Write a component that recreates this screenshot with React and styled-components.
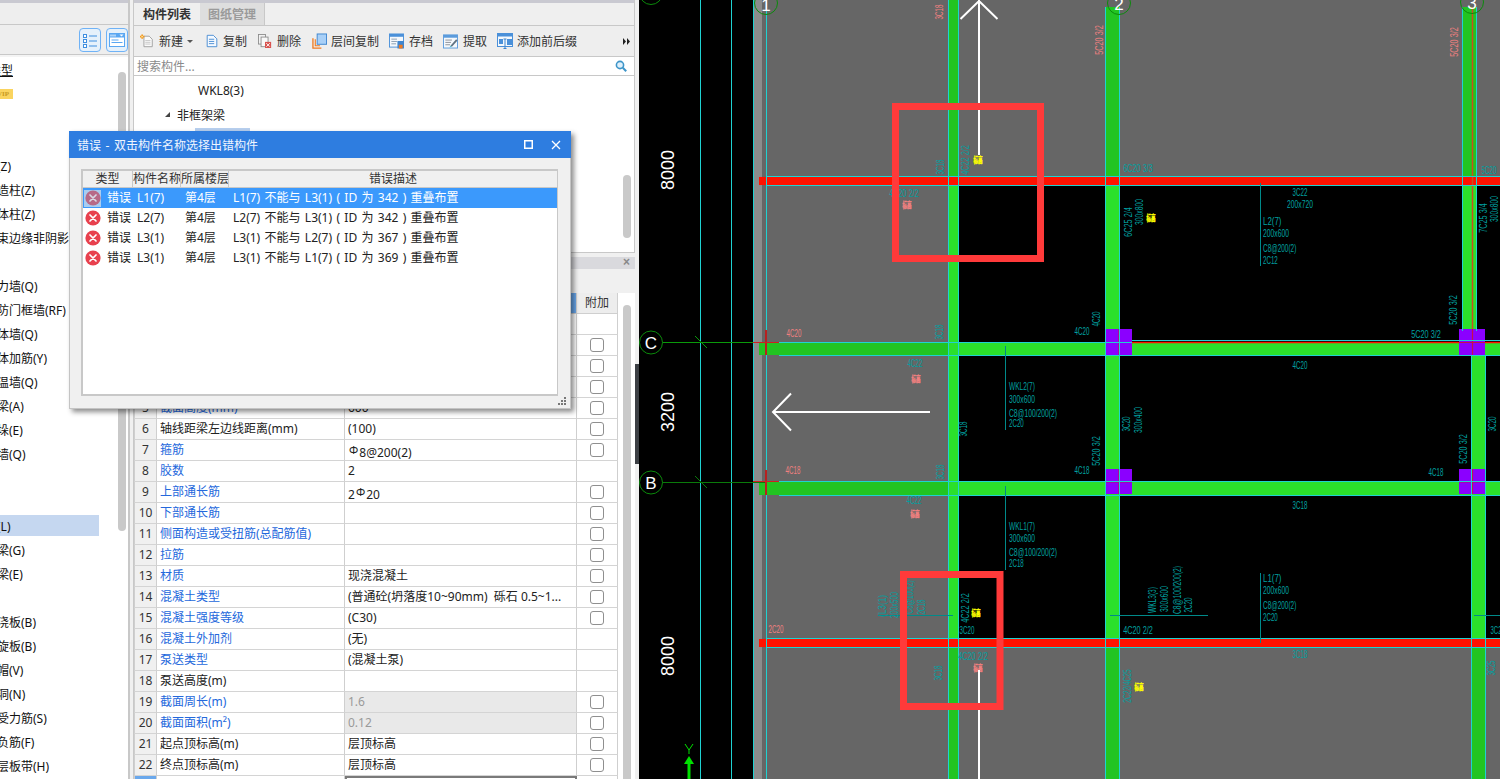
import React from "react";
import styled, { createGlobalStyle } from "styled-components";

const Global = createGlobalStyle`
  html, body { margin: 0; padding: 0; overflow: hidden; background: #f0f0f0; }
  body { font-family: "Noto Sans", "Noto Sans CJK SC", sans-serif; font-size: 12px; color: #222; }
  * { box-sizing: border-box; }
`;

const Page = styled.div`
  position: relative; display: flex; width: 1500px; height: 779px; overflow: hidden; background: #f0f0f0;
`;

/* ---------- left navigation ---------- */
const Nav = styled.aside`
  display: flex; flex-direction: column; width: 134px; height: 779px; flex: none;
  border-right: 1px solid #c8c8c8; 
`;
const NavInner = styled.div`
  display: flex; flex-direction: column; width: 130px; height: 100%; border-right: 2px solid #c8c8c8;
`;
const Strip = styled.div`
  height: 3px; flex: none; background: #c9c9d1;
`;
const NavBlank = styled.div`
  height: 22px; flex: none; background: #eeeeee; border-bottom: 1px solid #c8c8c8;
`;
const NavTools = styled.div`
  height: 30px; flex: none; display: flex; justify-content: flex-end; align-items: center; gap: 5px;
  padding-right: 0; background: #eeeeee; border-bottom: 1px solid #c8c8c8;
`;
const ViewButton = styled.div`
  width: 22px; height: 24px; display: flex; align-items: center; justify-content: center;
  border: 1px solid #6fb2f6; border-radius: 4px; background: #e6f1fb;
`;
const NavGap = styled.div`
  height: 2px; flex: none; background: #f4f4f4;
`;
const NavTree = styled.div`
  position: relative; flex: 1; background: #fff; overflow: hidden; padding-top: 1px;
`;
const NavRow = styled.div`
  width: 99px; height: 24px; padding: 1px 0 2px; line-height: 23px; white-space: nowrap;
  text-indent: ${(p) => p.$indent ?? -15}px;
  background: ${(p) => (p.$selected ? "#c5d7f0" : "transparent")};
  background-clip: content-box;
  text-decoration: ${(p) => (p.$link ? "underline" : "none")};
  color: #111;
`;
const Vip = styled.span`
  display: inline-block; width: 28px; height: 10px; line-height: 10px; text-indent: 0; text-align: right; padding-right: 4px;
  background: #fad45f; color: #c79a22; font: bold 7px/10px "Liberation Serif", serif; vertical-align: 3px;
`;
const NavScroll = styled.div`
  position: absolute; left: 118px; top: 15px; width: 8px; height: 459px; border-radius: 4px; background: #c9c9c9;
`;

/* ---------- middle panels ---------- */
const Main = styled.main`
  display: flex; flex-direction: column; width: 501px; height: 779px; flex: none;
`;
const ListPanel = styled.section`
  display: flex; flex-direction: column; height: 253px; flex: none; background: #fff; border-bottom: 1px solid #c8c8c8;
  border-right: 1px solid #c8c8c8;
`;
const TabBar = styled.div`
  display: flex; height: 23px; flex: none; background: #efefef; border-bottom: 1px solid #c8c8c8;
`;
const Tab = styled.div`
  width: ${(p) => (p.$active ? "66px" : "65px")}; padding-left: ${(p) => (p.$active ? "9px" : "8px")};
  line-height: 24px; font-weight: 700; font-size: 12px;
  background: ${(p) => (p.$active ? "#efefef" : "#dedede")};
  color: ${(p) => (p.$active ? "#333" : "#9a9a9a")};
  border-right: ${(p) => (p.$active ? "none" : "1px solid #c8c8c8")};
`;
const Toolbar = styled.div`
  display: flex; align-items: center; height: 31px; flex: none; padding-left: 6px; background: #eeeeee;
  border-bottom: 1px solid #c8c8c8; position: relative;
`;
const ToolItem = styled.div`
  display: flex; align-items: center; gap: ${(p) => p.$gap ?? 5}px; margin-right: ${(p) => p.$mr ?? 10}px;
  color: #333; white-space: nowrap;
`;
const Caret = styled.span`
  width: 0; height: 0; margin-left: -1px; border-left: 3px solid transparent; border-right: 3px solid transparent; border-top: 3px solid #555;
`;
const More = styled.div`
  position: absolute; right: 4px; top: 12px; display: flex;
`;
const SearchBar = styled.div`
  display: flex; align-items: center; justify-content: space-between; height: 19px; flex: none; padding: 0 7px 0 3px;
  color: #8a8a8a; background: #fff; border-bottom: 1px solid #c8c8c8;
`;
const ListTree = styled.div`
  position: relative; flex: 1; padding-top: 2px; overflow: hidden; background: #fff;
`;
const ListRow = styled.div`
  display: flex; align-items: center; gap: 7px; height: 24.5px; padding-left: ${(p) => p.$indent}px; color: #222;
`;
const TreeArrow = styled.span`
  width: 0; height: 0; border-left: 5px solid transparent; border-bottom: 5px solid #444;
`;
const PickedBar = styled.span`
  display: block; width: 55px; height: 22px; background: #b7cfee;
`;
const ListScroll = styled.div`
  position: absolute; left: 489px; top: 99px; width: 8px; height: 63px; border-radius: 4px; background: #c9c9c9;
`;
const PropPanel = styled.section`
  flex: 1; display: flex; flex-direction: column; min-height: 0; background: #fff; position: relative;
`;
const PropTitle = styled.div`
  height: 16px; flex: none; display: flex; justify-content: flex-end; align-items: flex-end; background: linear-gradient(#f0f0f0 4px, #d9d9dd 4px);
  padding: 0 5px 1px 0; color: #888; font: bold 12px/12px "Liberation Sans", sans-serif;
`;
const PropTools = styled.div`
  height: 24px; flex: none; background: #f0f0f0;
`;
const Table = styled.div`
  display: grid; grid-template-columns: 23px 188px 232px 41px; width: 484px; grid-auto-rows: 21px; align-content: start;
  flex: none;
`;
const Head = styled.div`
  background: ${(p) => (p.$accent ? "#6aa8ec" : "#ededed")};
  border-right: 1px solid #cfcfcf; border-bottom: 1px solid #cfcfcf;
  line-height: 20px; text-align: center; color: #333;
`;
const NumCell = styled.div`
  background: ${(p) => (p.$active ? "#6aa8ec" : "#f0f0f0")}; border-left: 1px solid #cfcfcf; border-right: 1px solid #cfcfcf; border-bottom: 1px solid #d4d4d4;
  line-height: 20px; text-align: center; color: #333; font-size: 12px;
`;
const NameCell = styled.div`
  padding-left: 3px; line-height: 20px; white-space: nowrap; overflow: hidden;
  color: ${(p) => (p.$link ? "#2468dc" : "#222")};
  border-right: 1px solid #cfcfcf; border-bottom: 1px solid #d4d4d4;
`;
const ValueCell = styled.div`
  padding-left: 3px; padding-right: 4px; line-height: 20px; white-space: pre; overflow: hidden;
  color: ${(p) => (p.$muted ? "#9a9a9a" : "#222")};
  background: ${(p) => (p.$muted ? "#e9e9e9" : "#fff")};
  border-right: 1px solid #cfcfcf; border-bottom: 1px solid #d4d4d4;
  ${(p) => p.$editing && "border: 2px solid #7a7a7a; border-bottom: none;"}
`;
const FlagCell = styled.div`
  display: flex; align-items: center; justify-content: center; background: #fff;
  border-right: 1px solid #cfcfcf; border-bottom: 1px solid #d4d4d4;
`;
const Check = styled.span`
  display: block; width: 14px; height: 14px; border: 1px solid #8f8f8f; border-radius: 3px; background: #fff;
`;
const Rebar = styled.span`
  font-size: 11px; vertical-align: 3px; margin: 0 1px;
`;
const PropScroll = styled.div`
  position: absolute; left: 489px; top: 52px; width: 8px; height: 500px; border-radius: 4px; background: #c9c9c9;
`;

/* ---------- splitter ---------- */
const Splitter = styled.div`
  width: 4px; flex: none; padding-top: 364px; background: #f0f0f0;
`;
const SplitHandle = styled.div`
  width: 4px; height: 100px; background: #3c3f44;
`;

/* ---------- CAD canvas ---------- */
const Canvas = styled.div`
  flex: 1; height: 779px; background: #000; overflow: hidden;
`;
const CadSvg = styled.svg`
  display: block; width: 861px; height: 779px;
  text { font-family: "Liberation Sans", sans-serif; }
`;

/* ---------- error dialog ---------- */
const Dialog = styled.div`
  position: absolute; left: 69px; top: 131px; width: 502px; height: 278px; display: flex; flex-direction: column;
  background: #f0f0f0; border: 1px solid #c4c4c4; border-top: none;
  box-shadow: 3px 3px 5px rgba(0, 0, 0, 0.45);
`;
const DialogTitle = styled.div`
  display: flex; align-items: center; height: 27px; flex: none; margin: 0 -1px; padding: 0 10px 0 8px; background: #2e7de0; color: #eef5ff;
`;
const DialogCaption = styled.span`
  flex: 1; word-spacing: 1.5px;
`;
const DialogIcons = styled.div`
  display: flex; align-items: center; gap: 18px;
`;
const DialogBody = styled.div`
  flex: 1; padding: 11px 12px 12px 11px; min-height: 0;
`;
const ErrorList = styled.div`
  height: 100%; background: #fff; border: 2px solid #c8c8c8; border-right-width: 1px; border-bottom-width: 2px; overflow: hidden;
`;
const ErrorHead = styled.div`
  display: grid; grid-template-columns: 50px 48px 48px 1fr; height: 17px; background: #f0f0f0; border-bottom: 1px solid #c8c8c8; line-height: 16px; color: #333;
`;
const HeadCell = styled.div`
  text-align: center; white-space: nowrap; overflow: hidden; border-right: 1px solid #c8c8c8;
  &:last-child { border-right: none; }
`;
const ErrorRow = styled.div`
  display: grid; grid-template-columns: 50px 48px 48px 1fr; height: 20px; line-height: 20px;
  background: ${(p) => (p.$selected ? "#3b99fc" : "#fff")};
  color: ${(p) => (p.$selected ? "#fff" : "#222")};
`;
const TypeCell = styled.div`
  display: flex; align-items: center; gap: 6px; padding-left: 1px; 
`;
const ErrorCell = styled.div`
  padding-left: 4px; white-space: pre; word-spacing: 1.2px;
`;
const IconFrame = styled.span`
  display: flex; width: 17px; height: 17px; align-items: center; justify-content: center;
  background: ${(p) => (p.$selected ? "#a9cdf0" : "transparent")};
`;
const Grip = styled.svg`
  position: absolute; right: 3px; bottom: 2px; width: 9px; height: 9px;
`;

/* ---------- icons ---------- */
const Ic = ({ w = 15, children }) => (
  <svg width={w} height="16" viewBox="0 0 16 16" style={{ flex: "none" }}>{children}</svg>
);
const IconNew = () => (
  <Ic w={14}>
    <path d="M4.5 2.5h6l3.5 3.5v8.5h-9.5z" fill="#fafafa" stroke="#9a9a9a" />
    <path d="M6 7.5h6M6 9.5h6M6 11.5h6" stroke="#c4c4c4" />
    <path d="M0 2h1.5V0.5h2V2H5v2H3.5v1.5h-2V4H0z" fill="#f39a1f" />
    <rect x="1.6" y="2.2" width="1.6" height="1.6" fill="#ffe9a8" />
  </Ic>
);
const IconCopy = () => (
  <Ic w={14}>
    <path d="M2.5 1.5h7l4 4v9h-11z" fill="#f4f9ff" stroke="#3f86d0" />
    <path d="M4.5 6h6M4.5 8.5h6M4.5 11h6" stroke="#3f86d0" />
  </Ic>
);
const IconDelete = () => (
  <Ic w={14}>
    <rect x="0.5" y="0.5" width="8" height="11" fill="#f2f2f2" stroke="#8a8a8a" />
    <rect x="3.5" y="3.5" width="8" height="11" fill="#f8f8f8" stroke="#8a8a8a" />
    <rect x="8" y="9" width="7" height="7" fill="#d9534f" />
    <path d="M9.5 10.5l4 4M13.5 10.5l-4 4" stroke="#fff" />
  </Ic>
);
const IconFloorCopy = () => (
  <Ic>
    <path d="M1 5v10.5h9" fill="none" stroke="#ee7b22" strokeWidth="1.4" />
    <path d="M3.5 6v7h5" fill="none" stroke="#ee7b22" strokeWidth="1.2" />
    <rect x="5.5" y="0.5" width="10" height="11" fill="#a9d0f7" stroke="#3f86d0" />
  </Ic>
);
const IconArchive = () => (
  <Ic>
    <rect x="0.5" y="0.5" width="15" height="14" fill="#f4f8fc" stroke="#4a90d9" />
    <rect x="0.5" y="0.5" width="15" height="3" fill="#4a90d9" />
    <path d="M2.5 6h6M2.5 8.5h6M2.5 11h5" stroke="#8a9db0" />
    <rect x="9" y="8" width="7" height="8" fill="#3f86d0" />
    <rect x="10.5" y="12" width="4" height="4" fill="#ee7b22" />
  </Ic>
);
const IconExtract = () => (
  <Ic>
    <rect x="0.5" y="1.5" width="15" height="14" fill="#f4f8fc" stroke="#5b9bdc" />
    <rect x="0.5" y="1.5" width="15" height="3" fill="#5b9bdc" />
    <path d="M2.5 7h7M2.5 9.5h6M2.5 12h5" stroke="#8a8f96" />
    <path d="M8 13l6-7 1.5 1.5-6 6.5z" fill="#5e7180" />
    <path d="M7 15l1-2 1.5 0.6z" fill="#2fb4c4" />
  </Ic>
);
const IconAffix = () => (
  <Ic w={16}>
    <rect x="0.5" y="0.5" width="15" height="13" fill="#f4f8fc" stroke="#4a90d9" />
    <rect x="0.5" y="0.5" width="15" height="3" fill="#4a90d9" />
    <rect x="2" y="6" width="4" height="5" fill="#4a90d9" />
    <rect x="10" y="6" width="5" height="6" fill="#4a90d9" />
    <path d="M6.5 6h3M8 6v9.5M6.5 15.5h3" stroke="#3f86d0" fill="none" />
  </Ic>
);
const IconSearch = () => (
  <svg width="12" height="12" viewBox="0 0 12 12">
    <circle cx="5" cy="5" r="3.6" fill="#dff0fb" stroke="#3d95c9" strokeWidth="1.6" />
    <path d="M7.8 7.8l3.4 3.4" stroke="#3d95c9" strokeWidth="2" />
  </svg>
);
const IconList = () => (
  <svg width="16" height="16" viewBox="0 0 16 16">
    {[2, 7, 12].map((y) => (
      <g key={y}>
        <rect x="1.5" y={y + 0.5} width="3" height="3" fill="#fff" stroke="#3f8fe0" />
        <path d={`M7 ${y + 2}h8`} stroke="#3f8fe0" />
      </g>
    ))}
  </svg>
);
const IconForm = () => (
  <svg width="16" height="14" viewBox="0 0 16 14">
    <rect x="0" y="0" width="16" height="14" fill="#5aa7f2" />
    <rect x="1" y="4.5" width="14" height="8.5" fill="#fff" />
    <path d="M2 1.5v2M4 1.5v2M6 1.5v2" stroke="#fff" />
    <path d="M10.5 1.5h4l-2 2z" fill="#fff" />
    <path d="M2.5 7h7M2.5 9.5h11" stroke="#5aa7f2" />
  </svg>
);
const IconError = ({ selected }) => (
  <svg width="16" height="16" viewBox="0 0 16 16">
    <circle cx="8" cy="8" r="7.6" fill={selected ? "#b76a88" : "#e8414e"} />
    <path d="M5 5l6 6M11 5l-6 6" stroke={selected ? "#d9d9e4" : "#fff"} strokeWidth="1.7" strokeLinecap="round" />
  </svg>
);
const IconMax = () => (
  <svg width="9" height="9" viewBox="0 0 9 9">
    <rect x="0.75" y="0.75" width="7.5" height="7.5" fill="none" stroke="#fff" strokeWidth="1.5" />
  </svg>
);
const IconClose = () => (
  <svg width="10" height="10" viewBox="0 0 10 10">
    <path d="M1 1l8 8M9 1l-8 8" stroke="#fff" strokeWidth="1.3" />
  </svg>
);
const IconMore = () => (
  <svg width="7" height="7" viewBox="0 0 7 7">
    <path d="M0 0l3 3.5L0 7zM4 0l3 3.5L4 7z" fill="#222" />
  </svg>
);

/* ---------- data ---------- */
const navRows = [
  { t: "类型", indent: -11, link: true },
  { vip: true },
  {}, {},
  { t: "柱(Z)" }, { t: "构造柱(Z)" }, { t: "砌体柱(Z)" }, { t: "约束边缘非阴影" },
  {},
  { t: "剪力墙(Q)" }, { t: "人防门框墙(RF)" }, { t: "砌体墙(Q)" }, { t: "砌体加筋(Y)" }, { t: "保温墙(Q)" },
  { t: "暗梁(A)" }, { t: "墙垛(E)" }, { t: "幕墙(Q)" },
  {}, {},
  { t: "梁(L)", selected: true }, { t: "连梁(G)" }, { t: "圈梁(E)" },
  {},
  { t: "现浇板(B)" }, { t: "螺旋板(B)" }, { t: "柱帽(V)" }, { t: "板洞(N)" }, { t: "板受力筋(S)" }, { t: "板负筋(F)" }, { t: "楼层板带(H)" },
];

const R8 = <><Rebar>Φ</Rebar>8@200(2)</>;
const R20 = <>2<Rebar>Φ</Rebar>20</>;
/* rows 1-4 lie entirely under the dialog, so only their frames and check boxes are drawn */
const propRows = [
  ["", "", 0, 0, false, true],
  ["", "", 1, 1, false, true],
  ["", "", 1, 1, false, true],
  ["", "", 1, 1, false, true],
  ["截面高度(mm)", "600", 1, 1],
  ["轴线距梁左边线距离(mm)", "(100)", 0, 1],
  ["箍筋", R8, 1, 1],
  ["胶数", "2", 1, 0],
  ["上部通长筋", R20, 1, 1],
  ["下部通长筋", "", 1, 1],
  ["侧面构造或受扭筋(总配筋值)", "", 1, 1],
  ["拉筋", "", 1, 1],
  ["材质", "现浇混凝土", 1, 1],
  ["混凝土类型", "(普通砼(坍落度10~90mm)  砾石 0.5~1...", 1, 1],
  ["混凝土强度等级", "(C30)", 1, 1],
  ["混凝土外加剂", "(无)", 1, 0],
  ["泵送类型", "(混凝土泵)", 1, 0],
  ["泵送高度(m)", "", 0, 0],
  ["截面周长(m)", "1.6", 1, 1, true],
  ["截面面积(m²)", "0.12", 1, 1, true],
  ["起点顶标高(m)", "层顶标高", 0, 1],
  ["终点顶标高(m)", "层顶标高", 0, 1],
];

const errors = [
  ["L1(7)", "L1(7) 不能与 L3(1) ( ID 为 342 ) 重叠布置"],
  ["L2(7)", "L2(7) 不能与 L3(1) ( ID 为 342 ) 重叠布置"],
  ["L3(1)", "L3(1) 不能与 L2(7) ( ID 为 367 ) 重叠布置"],
  ["L3(1)", "L3(1) 不能与 L1(7) ( ID 为 369 ) 重叠布置"],
];

/* ---------- CAD annotations: [text, x, y, rotated, colour, anchor] ---------- */
const TEAL = "#00a0a0";
const PINK = "#f08080";
const YEL = "#ffff00";
const notes = [
  ["3C18", 939, 12, 1, PINK],
  ["3C18", 940, 167, 1, TEAL],
  ["4C22 2/2", 965, 160, 1, TEAL],
  ["4C20 2/2", 904, 193, 0, TEAL],
  ["4C20", 794, 333, 0, PINK],
  ["3C18", 939, 332, 1, TEAL],
  ["4C22", 915, 363, 0, TEAL],
  ["5C20 3/2", 1099, 40, 1, PINK],
  ["5C20 3/2", 1454, 42, 1, PINK],
  ["6C20 3/3", 1138, 168, 0, TEAL],
  ["5C20", 1489, 170, 0, TEAL],
  ["6C25 2/4", 1128, 222, 1, TEAL],
  ["300x800", 1139, 212, 1, TEAL],
  ["3C22", 1300, 192, 0, TEAL],
  ["200x720", 1300, 204, 0, TEAL],
  ["L2(7)", 1263, 221, 0, TEAL, "start"],
  ["200x600", 1263, 233, 0, TEAL, "start"],
  ["C8@200(2)", 1263, 248, 0, TEAL, "start"],
  ["2C12", 1263, 260, 0, TEAL, "start"],
  ["7C25 3/4", 1483, 218, 1, TEAL],
  ["300x800", 1494, 209, 1, TEAL],
  ["5C20 3/2", 1453, 310, 1, TEAL],
  ["4C20", 1096, 319, 1, TEAL],
  ["4C20", 1082, 331, 0, TEAL],
  ["5C20 3/2", 1426, 334, 0, TEAL],
  ["4C20", 1300, 365, 0, TEAL],
  ["WKL2(7)", 1009, 386, 0, TEAL, "start"],
  ["300x600", 1009, 399, 0, TEAL, "start"],
  ["C8@100/200(2)", 1009, 413, 0, TEAL, "start"],
  ["2C20", 1009, 423, 0, TEAL, "start"],
  ["3C18", 963, 429, 1, TEAL],
  ["3C18", 940, 472, 1, TEAL],
  ["4C18", 793, 470, 0, PINK],
  ["4C22", 914, 500, 0, TEAL],
  ["WKL1(7)", 1009, 526, 0, TEAL, "start"],
  ["300x600", 1009, 538, 0, TEAL, "start"],
  ["C8@100/200(2)", 1009, 552, 0, TEAL, "start"],
  ["2C18", 1009, 563, 0, TEAL, "start"],
  ["(L3(1)", 882, 606, 1, TEAL],
  ["200x500", 894, 605, 1, TEAL],
  ["C8@100(2)", 909, 597, 1, TEAL],
  ["2C18", 921, 607, 1, TEAL],
  ["4C22 2/2", 965, 608, 1, TEAL],
  ["3C20", 967, 630, 0, TEAL],
  ["2C20", 776, 629, 0, PINK],
  ["4C20 2/2", 973, 656, 0, TEAL],
  ["3C18", 938, 673, 1, TEAL],
  ["3C20", 1126, 424, 1, TEAL],
  ["300x400", 1138, 420, 1, TEAL],
  ["5C20 3/2", 1096, 451, 1, TEAL],
  ["4C18", 1082, 470, 0, TEAL],
  ["5C20 3/2", 1463, 449, 1, TEAL],
  ["4C18", 1436, 472, 0, TEAL],
  ["3C20", 1492, 424, 1, TEAL],
  ["3C18", 1300, 505, 0, TEAL],
  ["WKL3(3)", 1152, 600, 1, TEAL],
  ["300x600", 1164, 599, 1, TEAL],
  ["C8@100/200(2)", 1177, 590, 1, TEAL],
  ["2C20", 1188, 605, 1, TEAL],
  ["L1(7)", 1263, 578, 0, TEAL, "start"],
  ["200x600", 1263, 590, 0, TEAL, "start"],
  ["C8@200(2)", 1263, 605, 0, TEAL, "start"],
  ["2C20", 1263, 617, 0, TEAL, "start"],
  ["4C20 2/2", 1138, 630, 0, TEAL],
  ["3C18", 1300, 654, 0, TEAL],
  ["2C22/4C25", 1127, 686, 1, TEAL],
  ["3C25", 1491, 668, 1, TEAL],
  ["3C2", 1496, 630, 0, TEAL],
];
const blobs = [
  [978, 159, YEL], [907, 204, PINK], [916, 378, PINK], [1151, 217, YEL],
  [915, 513, PINK], [976, 612, YEL], [978, 667, PINK], [1139, 686, YEL],
];

const Note = ({ d }) => {
  const [t, x, y, rot, fill, anchor = "middle"] = d;
  return (
    <text
      x={x} y={y} fill={fill} fontSize="11" textAnchor={anchor} dominantBaseline="central"
      textLength={t.length * 3.7} lengthAdjust="spacingAndGlyphs"
      transform={rot ? `rotate(-90 ${x} ${y})` : undefined}
    >{t}</text>
  );
};

const CYAN = "#1fd2d2";
const DIM = "#22c422";
const LIT = "#2be02b";
const RED = "#ff1200";
const VIO = "#8b00ff";

const CadDrawing = () => (
  <CadSvg viewBox="639 0 861 779">
    {/* slab fills */}
    <rect x="753" y="0" width="747" height="177" fill="#666" />
    <rect x="753" y="177" width="195" height="470" fill="#666" />
    <rect x="753" y="647" width="747" height="132" fill="#666" />
    <rect x="753" y="0" width="9" height="779" fill="#8c8c8c" />

    {/* green beams */}
    <rect x="759" y="343" width="189" height="12" fill={DIM} />
    <rect x="948" y="343" width="552" height="12" fill={LIT} />
    <rect x="759" y="482" width="189" height="13" fill={DIM} />
    <rect x="948" y="482" width="552" height="13" fill={LIT} />

    <rect x="948" y="0" width="10" height="177" fill={DIM} />
    <rect x="948" y="186" width="10" height="453" fill={LIT} />
    <rect x="948" y="647" width="10" height="132" fill={DIM} />

    <rect x="1106" y="7" width="13" height="170" fill={DIM} />
    <rect x="1106" y="186" width="13" height="453" fill={LIT} />
    <rect x="1106" y="647" width="13" height="132" fill={DIM} />

    <rect x="1463" y="7" width="13" height="170" fill={DIM} />
    <rect x="1463" y="186" width="13" height="145" fill={LIT} />
    <rect x="1472" y="355" width="13" height="284" fill={LIT} />
    <rect x="1472" y="647" width="13" height="132" fill={DIM} />

    {/* red beams */}
    <rect x="759" y="177" width="741" height="8" fill={RED} />
    <rect x="759" y="639" width="741" height="8" fill={RED} />
    <path d="M1472.5 7V340" stroke="#c8501e" strokeWidth="1.5" />
    <path d="M1132 342.500H1500" stroke={RED} strokeWidth="1.5" />

    {/* columns */}
    {[[1106, 329, 26], [1459, 329, 26], [1106, 469, 25], [1459, 469, 25]].map(([x, y, h]) => (
      <rect key={`${x}-${y}`} x={x} y={y} width="26" height={h} fill={VIO} />
    ))}
    <path d="M1119 329v26M1106 342.500h26M1472.500 329v26M1459 342.500h26M1119 469v25M1106 482h26M1472.500 469v25M1459 482h26" stroke="#c4104c" strokeWidth="1.2" />

    {/* axis and edge lines */}
    <g stroke={CYAN} strokeWidth="1" fill="none">
      <path d="M700.500 0V779M731.500 0V779M753.500 0V779M766.500 0V779" />
      <path d="M948.500 0V779M958.500 0V779" />
      <path d="M1105.500 7V779M1119.500 7V779" />
      <path d="M1462.500 7V331M1476.500 7V331M1471.500 355V779M1485.500 355V779" />
      <path d="M766 176.500H1500M766 185.500H1500M766 638.500H1500M766 647.500H1500" />
      <path d="M779 342.500H1132M1132 340.500H1500M779 355.500H1500" />
      <path d="M779 481.500H1500M779 495.500H1500" />
    </g>
    <path d="M639 342.500H766M695 336l12 12" stroke="#0a9a0a" strokeWidth="1" fill="none" />
    <path d="M639 482.500H766M695 476l12 12" stroke="#0a7a0a" strokeWidth="1" fill="none" />
    <path d="M766 330V355M766 470V495" stroke="#b82020" strokeWidth="2" />
    <path d="M753 342.500H779M753 481.500H779" stroke="#d02020" strokeWidth="1" />

    {/* leader lines */}
    <g stroke="#008a8a" strokeWidth="1" fill="none">
      <path d="M1260.500 183V266M1260.500 573V643M1005.500 346V430M1005.500 486V570" />
      <path d="M878 615.500H953M1110 615.500H1208M1474 615.500H1500" />
    </g>

    {/* axis bubbles */}
    <g stroke="#0b8a0b" strokeWidth="1" fill="#000">
      <circle cx="651" cy="342.500" r="11.500" />
      <circle cx="651" cy="482.500" r="11.500" />
      <circle cx="651" cy="-7" r="11.500" />
    </g>
    <g stroke="#0b8a0b" strokeWidth="1" fill="none">
      <circle cx="766" cy="3" r="11.500" />
      <circle cx="1119" cy="3" r="11.500" />
      <circle cx="1472" cy="2" r="11.500" />
    </g>
    <g fill="#fff" fontSize="17" textAnchor="middle">
      <text x="651" y="348.500">C</text>
      <text x="651" y="488.500">B</text>
      <text x="766" y="11">1</text>
      <text x="1119" y="10">2</text>
      <text x="1472" y="9">3</text>
    </g>
    {[[668, 170, "8000"], [668, 412, "3200"], [668, 656, "8000"]].map(([x, y, t]) => (
      <text key={y} x={x} y={y} fill="#fff" fontSize="18" textAnchor="middle" dominantBaseline="central" transform={`rotate(-90 ${x} ${y})`}>{t}</text>
    ))}

    {/* annotations */}
    {notes.map((d, i) => <Note key={i} d={d} />)}
    {blobs.map(([x, y, c]) => (
      <text key={`${x}-${y}`} x={x} y={y} fill={c} stroke={c} strokeWidth="0.5" fontSize="8" fontWeight="700" textAnchor="middle" dominantBaseline="central"
        textLength="9" lengthAdjust="spacingAndGlyphs" style={{ fontFamily: '"Noto Sans CJK SC", sans-serif' }}>标高</text>
    ))}

    {/* hand-drawn arrows */}
    <g stroke="#fff" strokeWidth="2" fill="none">
      <path d="M979 103V0M960.500 19L979 1l18.500 18M979 110V155" />
      <path d="M930 412H773M791 393.500L773 412l18 18.500" />
      <path d="M979 670V779" />
    </g>

    {/* Y axis marker */}
    <path d="M689 779V760" stroke="#00e000" strokeWidth="3" />
    <path d="M689 756l5 8h-10z" fill="#00e000" />
    <path d="M685 744l4 6 4-6M689 750v4" stroke="#00e000" strokeWidth="1" fill="none" />

    {/* review marks */}
    <g stroke="#ff3a3a" strokeWidth="7" fill="none">
      <rect x="895.500" y="106.500" width="145" height="152" />
      <rect x="903.500" y="574.500" width="96.500" height="132" />
    </g>
  </CadSvg>
);

const App = () => (
  <Page>
    <Global />
    <Nav>
      <NavInner>
        <Strip />
        <NavBlank />
        <NavTools>
          <ViewButton><IconList /></ViewButton>
          <ViewButton><IconForm /></ViewButton>
        </NavTools>
        <NavGap />
        <NavTree>
          {navRows.map((r, i) => (
            <NavRow key={i} $indent={r.indent} $link={r.link} $selected={r.selected}>
              {r.vip ? <Vip>VIP</Vip> : r.t}
            </NavRow>
          ))}
          <NavScroll />
        </NavTree>
      </NavInner>
    </Nav>

    <Main>
      <ListPanel>
        <Strip />
        <TabBar>
          <Tab $active>构件列表</Tab>
          <Tab>图纸管理</Tab>
        </TabBar>
        <Toolbar>
          <ToolItem $gap={5} $mr={12}><IconNew /><span>新建</span><Caret /></ToolItem>
          <ToolItem $gap={4} $mr={11}><IconCopy /><span>复制</span></ToolItem>
          <ToolItem $gap={5} $mr={11}><IconDelete /><span>删除</span></ToolItem>
          <ToolItem $gap={4} $mr={10}><IconFloorCopy /><span>层间复制</span></ToolItem>
          <ToolItem $gap={5} $mr={10}><IconArchive /><span>存档</span></ToolItem>
          <ToolItem $gap={5} $mr={10}><IconExtract /><span>提取</span></ToolItem>
          <ToolItem $gap={4} $mr={0}><IconAffix /><span>添加前后缀</span></ToolItem>
          <More><IconMore /></More>
        </Toolbar>
        <SearchBar>
          <span>搜索构件...</span>
          <IconSearch />
        </SearchBar>
        <ListTree>
          <ListRow $indent={64}>WKL8(3)</ListRow>
          <ListRow $indent={31}><TreeArrow />非框架梁</ListRow>
          <ListRow $indent={61}><PickedBar /></ListRow>
          <ListScroll />
        </ListTree>
      </ListPanel>

      <PropPanel>
        <PropTitle>×</PropTitle>
        <PropTools />
        <Table>
          <Head />
          <Head />
          <Head $accent />
          <Head>附加</Head>
          {propRows.map(([name, value, link, flag, muted, hidden], i) => (
            <React.Fragment key={i}>
              <NumCell>{hidden ? null : i + 1}</NumCell>
              <NameCell $link={link}>{name}</NameCell>
              <ValueCell $muted={muted}>{value}</ValueCell>
              <FlagCell>{flag ? <Check /> : null}</FlagCell>
            </React.Fragment>
          ))}
          <NumCell $active />
          <NameCell />
          <ValueCell $editing />
          <FlagCell><Check /></FlagCell>
        </Table>
        <PropScroll />
      </PropPanel>
    </Main>

    <Splitter><SplitHandle /></Splitter>
    <Canvas><CadDrawing /></Canvas>

    <Dialog>
      <DialogTitle>
        <DialogCaption>错误 - 双击构件名称选择出错构件</DialogCaption>
        <DialogIcons><IconMax /><IconClose /></DialogIcons>
      </DialogTitle>
      <DialogBody>
        <ErrorList>
          <ErrorHead>
            <HeadCell>类型</HeadCell>
            <HeadCell>构件名称</HeadCell>
            <HeadCell>所属楼层</HeadCell>
            <HeadCell>错误描述</HeadCell>
          </ErrorHead>
          {errors.map(([name, desc], i) => (
            <ErrorRow key={i} $selected={i === 0}>
              <TypeCell>
                <IconFrame $selected={i === 0}><IconError selected={i === 0} /></IconFrame>
                错误
              </TypeCell>
              <ErrorCell>{name}</ErrorCell>
              <ErrorCell>第4层</ErrorCell>
              <ErrorCell>{desc}</ErrorCell>
            </ErrorRow>
          ))}
        </ErrorList>
      </DialogBody>
      <Grip viewBox="0 0 9 9">
        <path d="M6 0h2v2H6zM3 3h2v2H3zM6 3h2v2H6zM0 6h2v2H0zM3 6h2v2H3zM6 6h2v2H6z" fill="#777" />
      </Grip>
    </Dialog>
  </Page>
);

export default App;
